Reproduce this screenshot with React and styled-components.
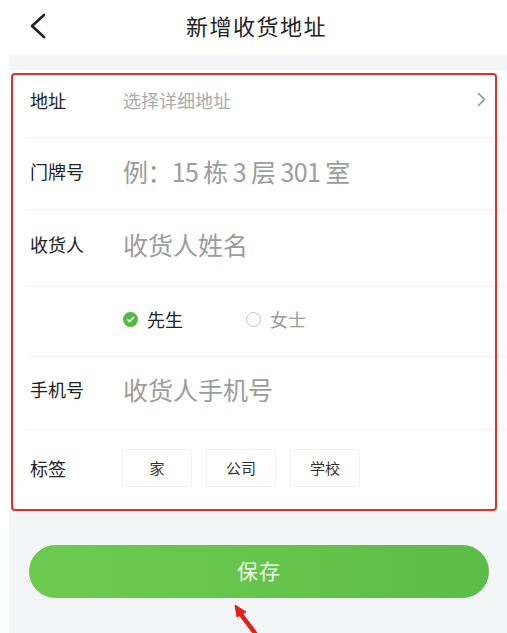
import React from "react";
import styled, { createGlobalStyle } from "styled-components";

const Global = createGlobalStyle`
  html, body {
    margin: 0;
    padding: 0;
    background: #fff;
    font-family: "Noto Sans CJK SC", "Noto Sans", sans-serif;
  }
`;

const Page = styled.div`
  width: 507px;
  height: 633px;
  overflow: hidden;
  position: relative;
  background: #fff;
`;

const Header = styled.div`
  box-sizing: border-box;
  height: 55px;
  padding-bottom: 6px;
  display: flex;
  align-items: center;
  justify-content: center;
  position: relative;
`;

const BackBtn = styled.div`
  position: absolute;
  left: 28px;
  top: 12px;
  width: 20px;
  height: 28px;
`;

const Title = styled.h1`
  margin: 0 0 0 6px;
  font-size: 22px;
  font-weight: 400;
  color: #222;
  letter-spacing: 1.5px;
`;

const Body = styled.div`
  margin-left: 9px;
  background: #f4f5f7;
  padding-top: 15px;
  height: 578px;
`;

const Card = styled.div`
  background: #fff;
  position: relative;
  padding-left: 18px;
`;

const Highlight = styled.div`
  position: absolute;
  left: 2px;
  top: 3px;
  width: 486px;
  height: 438px;
  border: 2px solid #e0302e;
  border-radius: 4px;
  box-sizing: border-box;
  pointer-events: none;
`;

const Row = styled.div`
  box-sizing: border-box;
  height: ${(p) => p.h}px;
  display: flex;
  align-items: center;
  border-bottom: ${(p) => (p.last ? "none" : "1px solid #f2f2f2")};
  padding-bottom: ${(p) => p.pb || 0}px;
  padding-right: 21px;
`;

const Label = styled.div`
  width: 93px;
  flex-shrink: 0;
  padding-left: 3px;
  font-size: 18px;
  color: #222;
`;

const Placeholder = styled.div`
  flex: 1;
  font-size: ${(p) => (p.small ? 18 : 25)}px;
  color: ${(p) => (p.small ? "#ababab" : "#9c9c9c")};
  letter-spacing: ${(p) => (p.tight ? "-0.6px" : "0")};
  white-space: nowrap;
`;

const Chevron = styled.div`
  width: 9px;
  height: 15px;
  display: flex;
`;

const RadioGroup = styled.div`
  display: flex;
  align-items: center;
  margin-left: 96px;
  gap: 63px;
`;

const Radio = styled.div`
  display: flex;
  align-items: center;
  gap: 9px;
  font-size: 18px;
  color: ${(p) => (p.active ? "#222" : "#999")};
`;

const Circle = styled.span`
  width: 15px;
  height: 15px;
  border-radius: 50%;
  box-sizing: border-box;
  display: flex;
  align-items: center;
  justify-content: center;
  background: ${(p) => (p.active ? "#4cbb3f" : "#fff")};
  border: ${(p) => (p.active ? "none" : "1.5px solid #c4c4c4")};
`;

const Tags = styled.div`
  display: flex;
  gap: 14px;
  margin-left: -1px;
`;

const Tag = styled.div`
  width: 70px;
  height: 38px;
  display: flex;
  align-items: center;
  justify-content: center;
  font-size: 15px;
  color: #333;
  border: 1px solid #f3f3f3;
  border-radius: 2px;
  box-shadow: 0 0 1px rgba(0, 0, 0, 0.04);
  box-sizing: border-box;
`;

const SaveWrap = styled.div`
  padding: 34px 9px 0 20px;
`;

const SaveButton = styled.button`
  width: 460px;
  height: 53px;
  border: none;
  border-radius: 27px;
  background: linear-gradient(90deg, #6ccb4f 0%, #63c34b 60%, #5bbd47 100%);
  color: #eef9e9;
  font-family: inherit;
  font-size: 21px;
  letter-spacing: 1px;
  display: flex;
  align-items: center;
  justify-content: center;
  padding-bottom: 4px;
`;

const Arrow = styled.svg`
  position: absolute;
  left: 228px;
  top: 600px;
`;

export default function App() {
  return (
    <Page>
      <Global />
      <Header>
        <BackBtn>
          <svg width="20" height="28" viewBox="0 0 20 28">
            <path d="M16 3 L4 14 L16 25" fill="none" stroke="#222" strokeWidth="2.6" strokeLinecap="round" strokeLinejoin="round" />
          </svg>
        </BackBtn>
        <Title>新增收货地址</Title>
      </Header>
      <Body>
        <Card>
          <Highlight />
          <Row h={68} pb={8}>
            <Label>地址</Label>
            <Placeholder small>选择详细地址</Placeholder>
            <Chevron>
              <svg width="9" height="15" viewBox="0 0 9 15">
                <path d="M1.5 1.5 L7.5 7.5 L1.5 13.5" fill="none" stroke="#8f8f8f" strokeWidth="1.5" strokeLinecap="round" strokeLinejoin="round" />
              </svg>
            </Chevron>
          </Row>
          <Row h={72} pb={6}>
            <Label>门牌号</Label>
            <Placeholder tight>例：15 栋 3 层 301 室</Placeholder>
          </Row>
          <Row h={77} pb={9}>
            <Label>收货人</Label>
            <Placeholder>收货人姓名</Placeholder>
          </Row>
          <Row h={70} pb={5}>
            <RadioGroup>
              <Radio active>
                <Circle active>
                  <svg width="9" height="9" viewBox="0 0 9 9">
                    <path d="M1.5 4.6 L3.6 6.6 L7.5 2.4" fill="none" stroke="#fff" strokeWidth="1.6" strokeLinecap="round" strokeLinejoin="round" />
                  </svg>
                </Circle>
                先生
              </Radio>
              <Radio>
                <Circle />
                女士
              </Radio>
            </RadioGroup>
          </Row>
          <Row h={73} pb={8}>
            <Label>手机号</Label>
            <Placeholder>收货人手机号</Placeholder>
          </Row>
          <Row h={81} pb={6} last>
            <Label>标签</Label>
            <Tags>
              <Tag>家</Tag>
              <Tag>公司</Tag>
              <Tag>学校</Tag>
            </Tags>
          </Row>
        </Card>
        <SaveWrap>
          <SaveButton>保存</SaveButton>
        </SaveWrap>
      </Body>
      <Arrow width="40" height="33" viewBox="0 0 40 33">
        <path d="M27 33 L11 12" stroke="#e3211b" strokeWidth="4.5" strokeLinecap="round" />
        <path d="M7 5 L18 12 L9 17 Z" fill="#e3211b" stroke="#e3211b" strokeWidth="1" strokeLinejoin="round" />
      </Arrow>
    </Page>
  );
}
